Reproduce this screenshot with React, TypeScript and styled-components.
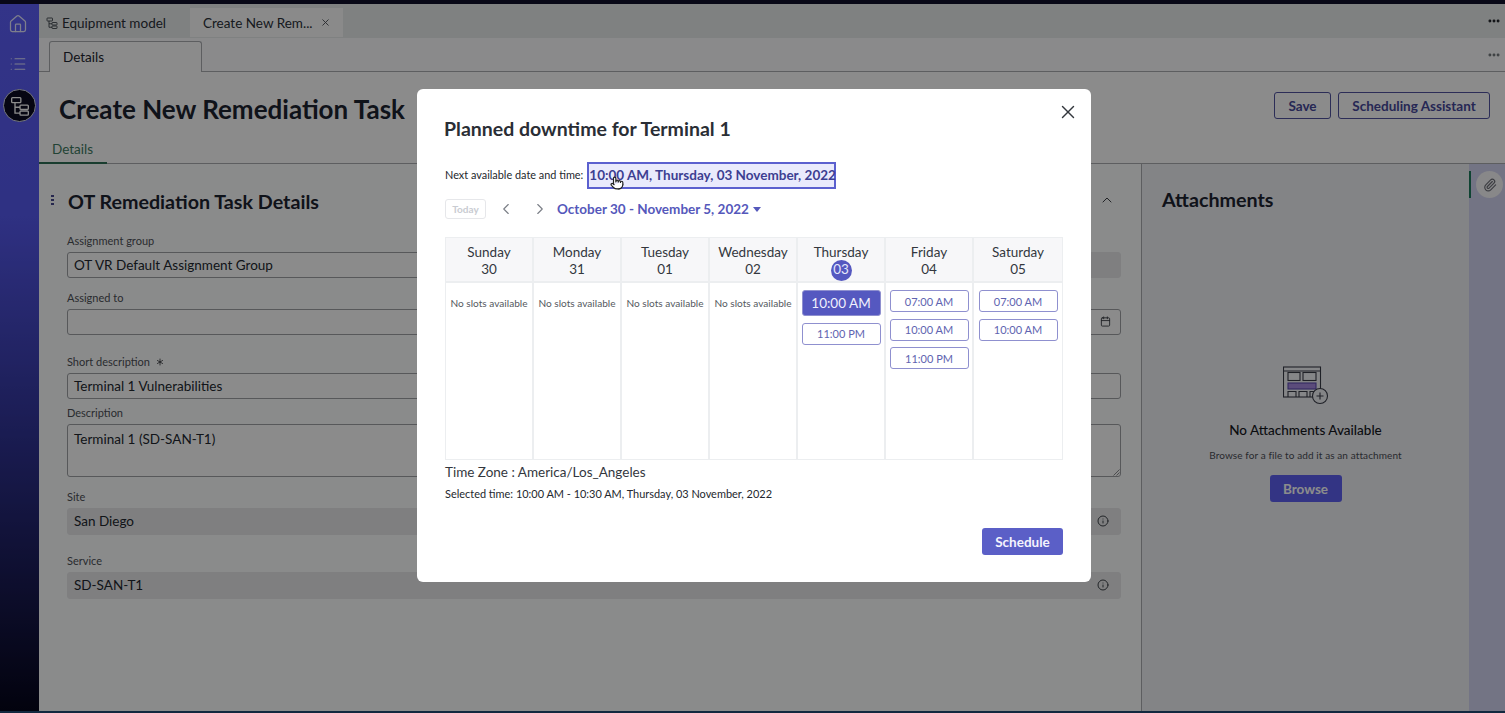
import React from "react";
import styled, { createGlobalStyle } from "styled-components";
import {
  Asterisk,
  Calendar,
  ChevronLeft,
  ChevronRight,
  ChevronUp,
  Home,
  Info,
  List,
  MoreHorizontal,
  Paperclip,
  Pointer,
  X,
} from "lucide-react";

const GlobalStyle = createGlobalStyle`
  html, body {
    margin: 0;
    height: 100%;
    overflow: hidden;
    background: #fff;
    font-family: Lato, "Open Sans", sans-serif;
    color: #1f2630;
  }
  * { box-sizing: border-box; }
`;

const Screen = styled.div`
  position: relative;
  width: 1505px;
  height: 713px;
  display: flex;
  flex-direction: column;
  overflow: hidden;
`;

const TopEdge = styled.div`
  height: 4px;
  flex: none;
  background: #10102a;
`;

const BottomEdge = styled.div`
  height: 2px;
  flex: none;
  background: #214974;
`;

const Shell = styled.div`
  flex: 1;
  display: flex;
  min-height: 0;
`;

const Sidebar = styled.nav`
  width: 39px;
  flex: none;
  display: flex;
  flex-direction: column;
  align-items: center;
  padding-top: 10px;
  color: #e4e6ff;
  background: linear-gradient(180deg, #5d5ff8 0%, #5659ee 30%, #2f3292 62%, #16174a 85%, #05051a 100%);
`;

const SideButton = styled.div`
  height: 20px;
  display: flex;
  align-items: center;
  justify-content: center;
  margin-bottom: 20px;
  padding-right: 3px;
`;

const ActiveApp = styled.div`
  width: 33px;
  height: 33px;
  border-radius: 50%;
  display: flex;
  align-items: center;
  justify-content: center;
  background: #0c0c22;
  border: 1px solid #d5d8e8;
  color: #fff;
  margin-top: -5px;
`;

const Main = styled.div`
  flex: 1;
  min-width: 0;
  display: flex;
  flex-direction: column;
`;

const TabRow = styled.div`
  height: 34px;
  flex: none;
  display: flex;
  align-items: flex-end;
  background: #e8ebec;
  padding-right: 4px;
`;

const AppTab = styled.div<{ $active?: boolean }>`
  height: 29px;
  width: ${(p) => (p.$active ? "153px" : "151px")};
  display: flex;
  align-items: center;
  gap: 4px;
  padding-left: ${(p) => (p.$active ? "13px" : "7px")};
  font-size: 13.5px;
  margin-bottom: 1px;
  background: ${(p) => (p.$active ? "#fbfcfc" : "transparent")};
  color: #2a3038;
`;

const TabClose = styled.span`
  display: flex;
  margin-left: 3px;
  color: #4b5058;
`;

const RowMore = styled.div<{ $muted?: boolean }>`
  margin-left: auto;
  align-self: center;
  display: flex;
  color: ${(p) => (p.$muted ? "#6f7478" : "#1a1d22")};
`;

const FormTabRow = styled.div`
  height: 34px;
  flex: none;
  display: flex;
  align-items: flex-end;
  padding: 0 4px 0 10px;
  background: #fbfcfd;
  border-bottom: 1px solid #a9acb0;
`;

const FormTab = styled.div`
  width: 153px;
  height: 31px;
  margin-bottom: -1px;
  display: flex;
  align-items: center;
  padding-left: 13px;
  font-size: 13.5px;
  background: #fdfefe;
  border: 1px solid #a9acb0;
  border-bottom: none;
  border-radius: 3px 3px 0 0;
`;

const PageHeader = styled.header`
  height: 60px;
  flex: none;
  display: flex;
  align-items: flex-start;
  justify-content: space-between;
  padding: 20px 15px 0 20px;
  background: #fdfefe;
`;

const PageTitle = styled.h1`
  margin: 0;
  font-size: 26px;
  line-height: 34px;
  font-weight: 700;
  color: #1d2330;
  white-space: nowrap;
`;

const HeaderActions = styled.div`
  display: flex;
  gap: 7px;
`;

const OutlineButton = styled.button<{ $w: number }>`
  width: ${(p) => p.$w}px;
  height: 27px;
  padding: 0;
  border-radius: 3px;
  border: 1px solid #50529f;
  background: transparent;
  color: #46489a;
  font: 700 13.5px Lato, sans-serif;
`;

const SectionTabs = styled.div`
  height: 32px;
  flex: none;
  background: #fdfefe;
  border-bottom: 1px solid #a9acb0;
`;

const SectionTab = styled.div`
  width: 68px;
  height: 32px;
  padding: 8px 0 0 13px;
  font-size: 13.5px;
  line-height: 18px;
  color: #3f7a62;
  border-bottom: 2px solid #2f6f57;
`;

const Body = styled.div`
  flex: 1;
  min-height: 0;
  display: flex;
`;

const FormPanel = styled.section`
  width: 1103px;
  flex: none;
  padding: 24px 20px 0 12px;
  background: #fcfdfe;
  border-right: 1px solid #a9acb0;
`;

const SectionHead = styled.div`
  display: flex;
  align-items: center;
  gap: 14px;
  height: 28px;
  margin-bottom: 19px;
`;

const DragDots = styled.span`
  width: 3px;
  height: 11px;
  margin-top: -6px;
  background: radial-gradient(circle, #45478f 1.2px, transparent 1.4px) 0 0 / 3px 4px repeat-y;
`;

const SectionTitle = styled.h2`
  flex: 1;
  margin: 0;
  font-size: 19.700px;
  line-height: 28px;
  font-weight: 700;
  color: #1d2330;
`;

const Collapse = styled.span`
  display: flex;
  margin-top: -4px;
  margin-right: 6px;
  color: #3c4046;
`;

const Fields = styled.div`
  padding-left: 16px;
`;

const FieldRow = styled.div<{ $gap: number }>`
  display: flex;
  gap: 16px;
  margin-bottom: ${(p) => p.$gap}px;
`;

const Field = styled.div`
  flex: 1;
  min-width: 0;
`;

const FieldLabel = styled.label`
  display: flex;
  align-items: center;
  height: 12px;
  margin-bottom: 5px;
  font-size: 11px;
  line-height: 12px;
  color: #4c5056;
  white-space: nowrap;
`;

const Required = styled.span`
  display: flex;
  margin-left: 4px;
  color: #24272c;
`;

const Control = styled.div<{ $filled?: boolean; $h?: number }>`
  position: relative;
  height: ${(p) => p.$h ?? 26}px;
  display: flex;
  justify-content: space-between;
  padding: ${(p) => (p.$h && p.$h > 30 ? "5px" : "3px")} 11px 0 6px;
  font-size: 13.5px;
  line-height: 18px;
  color: #22272e;
  border-radius: 3px;
  background: ${(p) => (p.$filled ? "#e7e8ea" : "#fdfefe")};
  border: 1px solid ${(p) => (p.$filled ? "#e7e8ea" : "#9ea1a5")};
`;

const FieldIcon = styled.span`
  display: flex;
  margin-top: 3px;
  color: #3e4248;
`;

const CalendarIcon = styled(FieldIcon)`
  margin-right: -2px;
`;

const ResizeGrip = styled.svg`
  position: absolute;
  right: 0;
  bottom: 0;
`;

const AttachPanel = styled.aside`
  width: 327px;
  flex: none;
  padding: 22px 0 0 20px;
  background: #eff0f5;
`;

const AttachTitle = styled.h2`
  margin: 0;
  font-size: 19.700px;
  line-height: 28px;
  font-weight: 700;
  color: #1d2330;
`;

const EmptyState = styled.div`
  margin: 152px 0 0 -20px;
  display: flex;
  flex-direction: column;
  align-items: center;
`;

const EmptyTitle = styled.div`
  margin-top: 15px;
  font-size: 13.500px;
  line-height: 18px;
  font-weight: 500;
  color: #14171c;
`;

const EmptyText = styled.div`
  margin-top: 9px;
  font-size: 10px;
  line-height: 14px;
  letter-spacing: 0.1px;
  color: #4a4d54;
`;

const BrowseButton = styled.button`
  margin-top: 13px;
  width: 72px;
  height: 27px;
  padding: 0;
  border: none;
  border-radius: 3px;
  background: #5d60f0;
  color: #fff;
  font: 700 13.5px Lato, sans-serif;
`;

const Rail = styled.div`
  flex: 1;
  padding: 7px 0 0 0;
  display: flex;
  align-items: flex-start;
  gap: 5px;
  background: #d2d4f0;
`;

const RailMark = styled.span`
  width: 2px;
  height: 27px;
  background: #1c7a5c;
`;

const ClipButton = styled.span`
  width: 27px;
  height: 27px;
  border-radius: 50%;
  background: #f7f7fa;
  display: flex;
  align-items: center;
  justify-content: center;
  color: #6e7078;
`;

const Scrim = styled.div`
  position: absolute;
  inset: 0;
  padding: 89px 0 0 417px;
  background: rgba(0, 0, 0, 0.45);
`;

const Modal = styled.div`
  position: relative;
  width: 674px;
  height: 493px;
  padding: 27px 28px 0 28px;
  border-radius: 6px;
  background: #fff;
  color: #2b2f36;
`;

const CloseButton = styled.span`
  position: absolute;
  top: 12px;
  right: 12px;
  display: flex;
  color: #33373d;
`;

const ModalTitle = styled.h2`
  margin: 0 0 0 -1px;
  font-size: 19.500px;
  line-height: 26px;
  font-weight: 700;
  color: #2a2e35;
`;

const NextRow = styled.div`
  margin-top: 20px;
  height: 27px;
  display: flex;
  align-items: center;
  gap: 4px;
  font-size: 10.900px;
  color: #24282e;
`;

const NextLabel = styled.span`
  padding-bottom: 3px;
`;

const NextValue = styled.div`
  position: relative;
  width: 249px;
  height: 27px;
  padding: 0 0 2px 0;
  display: flex;
  align-items: center;
  white-space: nowrap;
  font-size: 13.500px;
  font-weight: 700;
  color: #3d3f92;
  background: #e9eafc;
  border: 2px solid #5b60cf;
`;

const Cursor = styled.span`
  position: absolute;
  left: 21px;
  top: 12px;
  display: flex;
  color: #222;
`;

const NavRow = styled.div`
  margin-top: 10px;
  height: 20px;
  display: flex;
  align-items: center;
`;

const TodayButton = styled.button`
  width: 41px;
  height: 20px;
  padding: 0;
  border: 1px solid #e6e7ea;
  border-radius: 3px;
  background: #fff;
  color: #c9ccd2;
  font: 700 10px Lato, sans-serif;
`;

const NavArrow = styled.span<{ $after: number }>`
  display: flex;
  margin-left: 11px;
  margin-right: ${(p) => p.$after}px;
  color: #7a7e86;
`;

const RangeLabel = styled.div`
  font-size: 13.500px;
  font-weight: 700;
  color: #5558bb;
  white-space: nowrap;
`;

const Caret = styled.span`
  display: inline-block;
  margin-left: 4px;
  vertical-align: 2px;
  border-left: 4.500px solid transparent;
  border-right: 4.500px solid transparent;
  border-top: 5px solid #5558bb;
`;

const Calendars = styled.div`
  margin-top: 18px;
  width: 618px;
  height: 223px;
  display: grid;
  grid-template-columns: repeat(7, minmax(0, 1fr));
  grid-template-rows: 45px 1fr;
  border: 1px solid #eceef0;
`;

const DayHead = styled.div`
  padding-top: 6px;
  text-align: center;
  font-size: 13.500px;
  line-height: 17px;
  color: #33373e;
  background: #f7f7f9;
  border-right: 2px solid #eceef0;
  border-bottom: 2px solid #eceef0;
  &:nth-child(7) { border-right: none; }
`;

const DayNumber = styled.span<{ $today?: boolean }>`
  display: block;
  width: 21px;
  height: 21px;
  margin: ${(p) => (p.$today ? "-1px" : "0")} auto 0;
  line-height: ${(p) => (p.$today ? "19px" : "17px")};
  border-radius: 50%;
  color: ${(p) => (p.$today ? "#e6e7fb" : "#33373e")};
  background: ${(p) => (p.$today ? "#5558c0" : "transparent")};
`;

const DayCell = styled.div`
  padding: 7px 4px 0;
  display: flex;
  flex-direction: column;
  align-items: center;
  gap: 6.500px;
  border-right: 2px solid #eceef0;
  &:last-child { border-right: none; }
`;

const NoSlots = styled.div`
  padding-top: 7px;
  font-size: 10.100px;
  line-height: 12px;
  color: #555960;
  white-space: nowrap;
`;

const SlotButton = styled.button<{ $selected?: boolean }>`
  width: 79px;
  height: ${(p) => (p.$selected ? "26px" : "22px")};
  padding: 0;
  border-radius: 3px;
  border: 1px solid #8f90cf;
  background: ${(p) => (p.$selected ? "#5558c0" : "#fff")};
  color: ${(p) => (p.$selected ? "#f1f1fd" : "#6063b0")};
  font: 400 ${(p) => (p.$selected ? "13.5px" : "11px")} Lato, sans-serif;
`;

const TimeZone = styled.div`
  margin-top: 3px;
  font-size: 13.500px;
  line-height: 18px;
  color: #33373e;
`;

const SelectedTime = styled.div`
  margin-top: 6px;
  font-size: 10.950px;
  line-height: 14px;
  color: #24282e;
`;

const ModalFooter = styled.div`
  margin-top: 27px;
  display: flex;
  justify-content: flex-end;
`;

const ScheduleButton = styled.button`
  width: 81px;
  height: 27px;
  padding: 0;
  border: none;
  border-radius: 3px;
  background: #5b5fc7;
  color: #f3f3fd;
  font: 700 13.5px Lato, sans-serif;
`;

// tree glyph used by the app rail and the first tab
const TreeIcon = ({ size }: { size: number }) => (
  <svg width={size} height={size} viewBox="0 0 24 24" fill="none" stroke="currentColor" strokeWidth="1.6">
    <rect x="2" y="2" width="11" height="6" rx="1" />
    <rect x="12" y="11" width="10" height="5" rx="1" />
    <rect x="12" y="18" width="10" height="5" rx="1" />
    <path d="M6 8v12.5h6M6 13.5h6" />
  </svg>
);

const EmptyIcon = () => (
  <svg width="46" height="40" viewBox="0 0 46 40" fill="none" stroke="#3a3d48" strokeWidth="1.1">
    <rect x="0.5" y="1" width="37" height="30" fill="#f3f4f8" />
    <path d="M1 5h36" />
    <rect x="5" y="6.5" width="12" height="8" />
    <rect x="20" y="6.5" width="13" height="8" />
    <rect x="5" y="17" width="28" height="6" fill="#a78be0" stroke="#5a4bb0" />
    <path d="M5 31v-5.500h8V31M16 31v-5.500h8V31M27 31v-5.500h6" />
    <circle cx="37" cy="30" r="7.500" fill="#eff0f5" />
    <path d="M37 26.500v7M33.500 30h7" />
  </svg>
);

const DAYS = [
  { name: "Sunday", date: "30", slots: [] as string[] },
  { name: "Monday", date: "31", slots: [] as string[] },
  { name: "Tuesday", date: "01", slots: [] as string[] },
  { name: "Wednesday", date: "02", slots: [] as string[] },
  { name: "Thursday", date: "03", slots: ["10:00 AM", "11:00 PM"], today: true },
  { name: "Friday", date: "04", slots: ["07:00 AM", "10:00 AM", "11:00 PM"] },
  { name: "Saturday", date: "05", slots: ["07:00 AM", "10:00 AM"] },
];

const App = () => {
  return (
    <Screen>
      <GlobalStyle />
      <TopEdge />
      <Shell>
        <Sidebar>
          <SideButton>
            <Home size={20} strokeWidth={1.5} />
          </SideButton>
          <SideButton>
            <List size={18} strokeWidth={1.5} />
          </SideButton>
          <ActiveApp>
            <TreeIcon size={20} />
          </ActiveApp>
        </Sidebar>
        <Main>
          <TabRow>
            <AppTab>
              <TreeIcon size={12} />
              Equipment model
            </AppTab>
            <AppTab $active>
              Create New Rem...
              <TabClose>
                <X size={11} />
              </TabClose>
            </AppTab>
            <RowMore>
              <MoreHorizontal size={14} strokeWidth={3} />
            </RowMore>
          </TabRow>
          <FormTabRow>
            <FormTab>Details</FormTab>
            <RowMore $muted>
              <MoreHorizontal size={14} strokeWidth={3} />
            </RowMore>
          </FormTabRow>
          <PageHeader>
            <PageTitle>Create New Remediation Task</PageTitle>
            <HeaderActions>
              <OutlineButton $w={57}>Save</OutlineButton>
              <OutlineButton $w={152}>Scheduling Assistant</OutlineButton>
            </HeaderActions>
          </PageHeader>
          <SectionTabs>
            <SectionTab>Details</SectionTab>
          </SectionTabs>
          <Body>
            <FormPanel>
              <SectionHead>
                <DragDots />
                <SectionTitle>OT Remediation Task Details</SectionTitle>
                <Collapse>
                  <ChevronUp size={16} strokeWidth={1.5} />
                </Collapse>
              </SectionHead>
              <Fields>
                <FieldRow $gap={14}>
                  <Field>
                    <FieldLabel>Assignment group</FieldLabel>
                    <Control>OT VR Default Assignment Group</Control>
                  </Field>
                  <Field>
                    <FieldLabel>&nbsp;</FieldLabel>
                    <Control $filled />
                  </Field>
                </FieldRow>
                <FieldRow $gap={21}>
                  <Field>
                    <FieldLabel>Assigned to</FieldLabel>
                    <Control />
                  </Field>
                  <Field>
                    <FieldLabel>&nbsp;</FieldLabel>
                    <Control>
                      <span />
                      <CalendarIcon>
                        <Calendar size={11} />
                      </CalendarIcon>
                    </Control>
                  </Field>
                </FieldRow>
                <FieldRow $gap={8}>
                  <Field>
                    <FieldLabel>
                      Short description
                      <Required>
                        <Asterisk size={12} strokeWidth={1.5} />
                      </Required>
                    </FieldLabel>
                    <Control>Terminal 1 Vulnerabilities</Control>
                  </Field>
                </FieldRow>
                <FieldRow $gap={14}>
                  <Field>
                    <FieldLabel>Description</FieldLabel>
                    <Control $h={53}>
                      Terminal 1 (SD-SAN-T1)
                      <ResizeGrip width="7" height="7" viewBox="0 0 7 7" stroke="#6d7075" strokeWidth="0.8">
                        <path d="M0.500 6.500L6.500 0.500M3.500 6.500L6.500 3.500" />
                      </ResizeGrip>
                    </Control>
                  </Field>
                </FieldRow>
                <FieldRow $gap={20}>
                  <Field>
                    <FieldLabel>Site</FieldLabel>
                    <Control $filled $h={27}>
                      San Diego
                      <FieldIcon>
                        <Info size={12} />
                      </FieldIcon>
                    </Control>
                  </Field>
                </FieldRow>
                <FieldRow $gap={0}>
                  <Field>
                    <FieldLabel>Service</FieldLabel>
                    <Control $filled $h={27}>
                      SD-SAN-T1
                      <FieldIcon>
                        <Info size={12} />
                      </FieldIcon>
                    </Control>
                  </Field>
                </FieldRow>
              </Fields>
            </FormPanel>
            <AttachPanel>
              <AttachTitle>Attachments</AttachTitle>
              <EmptyState>
                <EmptyIcon />
                <EmptyTitle>No Attachments Available</EmptyTitle>
                <EmptyText>Browse for a file to add it as an attachment</EmptyText>
                <BrowseButton>Browse</BrowseButton>
              </EmptyState>
            </AttachPanel>
            <Rail>
              <RailMark />
              <ClipButton>
                <Paperclip size={14} />
              </ClipButton>
            </Rail>
          </Body>
        </Main>
      </Shell>
      <BottomEdge />
      <Scrim>
        <Modal>
          <CloseButton>
            <X size={22} strokeWidth={1.5} />
          </CloseButton>
          <ModalTitle>Planned downtime for Terminal 1</ModalTitle>
          <NextRow>
            <NextLabel>Next available date and time:</NextLabel>
            <NextValue>
              10:00 AM, Thursday, 03 November, 2022
              <Cursor>
                <Pointer size={14} fill="#fff" />
              </Cursor>
            </NextValue>
          </NextRow>
          <NavRow>
            <TodayButton>Today</TodayButton>
            <NavArrow $after={5}>
              <ChevronLeft size={18} strokeWidth={1.5} />
            </NavArrow>
            <NavArrow $after={8}>
              <ChevronRight size={18} strokeWidth={1.5} />
            </NavArrow>
            <RangeLabel>
              October 30 - November 5, 2022
              <Caret />
            </RangeLabel>
          </NavRow>
          <Calendars>
            {DAYS.map((d) => (
              <DayHead key={d.name}>
                {d.name}
                <DayNumber $today={d.today}>{d.date}</DayNumber>
              </DayHead>
            ))}
            {DAYS.map((d) => (
              <DayCell key={d.name}>
                {d.slots.length === 0 && <NoSlots>No slots available</NoSlots>}
                {d.slots.map((s, i) => (
                  <SlotButton key={s} $selected={d.today && i === 0}>
                    {s}
                  </SlotButton>
                ))}
              </DayCell>
            ))}
          </Calendars>
          <TimeZone>Time Zone : America/Los_Angeles</TimeZone>
          <SelectedTime>Selected time: 10:00 AM - 10:30 AM, Thursday, 03 November, 2022</SelectedTime>
          <ModalFooter>
            <ScheduleButton>Schedule</ScheduleButton>
          </ModalFooter>
        </Modal>
      </Scrim>
    </Screen>
  );
};

export default App;
